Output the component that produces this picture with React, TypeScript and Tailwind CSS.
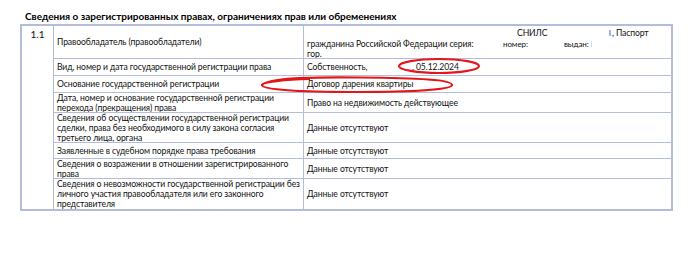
import React from "react"

type Row = {
  label: string[]
  value: React.ReactNode
  h: string
}

const rows: Row[] = [
  {
    label: ["Вид, номер и дата  государственной регистрации права"],
    value: (
      <div className="flex">
        <span className="w-[105px] shrink-0">Собственность,</span>
        <span>, 05.12.2024</span>
      </div>
    ),
    h: "h-[17px]",
  },
  {
    label: ["Основание государственной регистрации"],
    value: "Договор дарения квартиры",
    h: "h-[17px]",
  },
  {
    label: [
      "Дата, номер и основание государственной регистрации",
      "перехода (прекращения) права",
    ],
    value: "Право на недвижимость действующее",
    h: "h-[20px]",
  },
  {
    label: [
      "Сведения об осуществлении государственной регистрации",
      "сделки, права без необходимого в силу закона согласия",
      "третьего лица, органа",
    ],
    value: "Данные отсутствуют",
    h: "h-[30px]",
  },
  {
    label: ["Заявленные в судебном порядке права требования"],
    value: "Данные отсутствуют",
    h: "h-[16px]",
  },
  {
    label: [
      "Сведения о возражении в отношении зарегистрированного",
      "права",
    ],
    value: "Данные отсутствуют",
    h: "h-[20px]",
  },
  {
    label: [
      "Сведения о невозможности государственной регистрации без",
      "личного участия правообладателя или его законного",
      "представителя",
    ],
    value: "Данные отсутствуют",
    h: "h-[30px]",
  },
]

const line = "border-[#b3bddb]"

export default function App() {
  return (
    <div className="relative w-[700px] h-[257px] bg-white text-[#111111] font-['Lato',sans-serif]">
      <div className="pl-[25px] pt-[10px] h-[24px] text-[10px] leading-[13px] font-bold text-black">
        Сведения о зарегистрированных правах, ограничениях прав или обременениях
      </div>

      <div className={`ml-[20px] w-[653px] flex border-2 ${line} text-[8.6px] leading-[10px] tracking-[-0.1px] whitespace-nowrap`}>
        <div className={`w-[32px] shrink-0 border-r ${line} text-center pt-[2px] text-[10px] leading-[12px] tracking-normal`}>
          1.1
        </div>
        <div className="flex-1 flex flex-col">
          <div className={`h-[33px] flex border-b ${line}`}>
            <div className={`w-[250px] shrink-0 border-r ${line} pl-[3px] flex items-center`}>
              Правообладатель (правообладатели)
            </div>
            <div className="flex-1 pl-[3px] pt-[1px] overflow-hidden">
              <div className="flex items-center h-[11px]">
                <span className="ml-[210px] w-[92px] shrink-0">СНИЛС</span>
                <span className="w-[2px] h-[6px] bg-[#9fb4e6] mr-[1px] shrink-0" />
                <span>, Паспорт</span>
              </div>
              <div className="flex h-[11px] items-center">
                <span className="w-[196px] shrink-0">гражданина Российской Федерации серия:</span>
                <span className="w-[61px] shrink-0 text-[8px]">номер:</span>
                <span className="text-[8px]">выдан:</span>
                <span className="ml-[2px] w-[1px] h-[6px] bg-[#cfd9f2]" />
              </div>
              <div className="h-[10px]">гор.</div>
            </div>
          </div>
          {rows.map((r, i) => (
            <div
              key={i}
              className={`${r.h} flex ${i < rows.length - 1 ? "border-b" : ""} ${line}`}
            >
              <div className={`w-[250px] shrink-0 border-r ${line} pl-[3px] flex flex-col justify-center overflow-hidden`}>
                {r.label.map((l, j) => (
                  <div key={j} className="h-[10px]">
                    {l}
                  </div>
                ))}
              </div>
              <div className="flex-1 pl-[3px] flex items-center">{r.value}</div>
            </div>
          ))}
        </div>
      </div>

      {/* red hand-drawn marks over the document */}
      <svg
        className="absolute left-0 top-0 pointer-events-none"
        width={700}
        height={257}
        viewBox="0 0 700 257"
      >
        <ellipse cx={439} cy={66} rx={40} ry={7} fill="none" stroke="#e3161b" strokeWidth={2.2} />
        <path
          d="M 262 86 C 262 77, 330 77, 360 77.5 C 420 78, 452 80, 452 85 C 452 90, 410 92, 356 92 C 300 92, 262 90, 262 85 C 262 82, 285 79.5, 310 79"
          fill="none"
          stroke="#e3161b"
          strokeWidth={2.2}
        />
      </svg>
    </div>
  )
}
